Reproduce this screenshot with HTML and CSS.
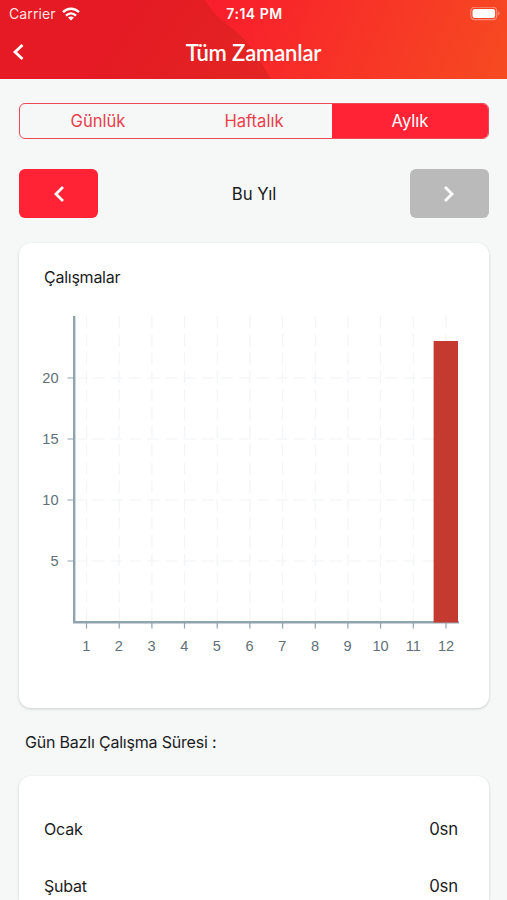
FILE: index.html
```
<!DOCTYPE html>
<html lang="tr">
<head>
  <meta charset="UTF-8">
  <meta name="viewport" content="width=device-width, initial-scale=1.0">
  <title>Tüm Zamanlar</title>
  <link rel="stylesheet" href="styles.css">
</head>
<body>
  <header class="header">
    <svg class="header-bg" viewBox="0 0 507 79" preserveAspectRatio="none">
      <defs>
        <linearGradient id="dark" gradientUnits="userSpaceOnUse" x1="120" y1="20" x2="260" y2="110">
          <stop offset="0" stop-color="#e51a24"/>
          <stop offset="1" stop-color="#e22623"/>
        </linearGradient>
        <linearGradient id="bright" gradientUnits="userSpaceOnUse" x1="225" y1="0" x2="490" y2="110">
          <stop offset="0" stop-color="#f91f2c"/>
          <stop offset="1" stop-color="#f64a21"/>
        </linearGradient>
      </defs>
      <rect width="507" height="79" fill="url(#dark)"/>
      <path fill="url(#bright)" d="M205 0C214 16 226 23 238 33C252 46 261 62 271 79H507V0Z"/>
    </svg>
    <div class="status-bar">
      <div class="carrier">
        <span>Carrier</span>
        <svg width="18" height="14" viewBox="0 0 18 14" fill="none" stroke="#fff" stroke-width="2.4">
          <path d="M1 5.2C5.5 0.6 12.5 0.6 17 5.2"/>
          <path d="M4 8.6C7 5.7 11 5.7 14 8.6"/>
          <path fill="#fff" stroke="none" d="M9 13.6L6 10.6Q9 8.3 12 10.6Z"/>
        </svg>
      </div>
      <span class="time">7:14 PM</span>
      <svg class="battery" width="30" height="14" viewBox="0 0 30 14">
        <rect x="0.8" y="0.2" width="26" height="12.4" rx="3.8" fill="none" stroke="#fff" stroke-opacity="0.4" stroke-width="1.2"/>
        <rect x="2.5" y="1.9" width="22.6" height="9" rx="2.2" fill="#fff"/>
        <path d="M28.2 4.3Q29.6 5 29.6 6.4Q29.6 7.8 28.2 8.5Z" fill="#fff" fill-opacity="0.4"/>
      </svg>
    </div>
    <div class="nav-bar">
      <svg class="back" width="12" height="18" viewBox="0 0 12 18"><path d="M10.5 2L3 9L10.5 16"/></svg>
      <h1>Tüm Zamanlar</h1>
    </div>
  </header>

  <main class="content">
    <div class="tabs">
      <div class="tab">Günlük</div>
      <div class="tab">Haftalık</div>
      <div class="tab active">Aylık</div>
    </div>

    <div class="period">
      <div class="period-btn">
        <svg width="12" height="18" viewBox="0 0 12 18"><path d="M10 2L3 9L10 16"/></svg>
      </div>
      <span class="period-name">Bu Yıl</span>
      <div class="period-btn disabled">
        <svg width="12" height="18" viewBox="0 0 12 18"><path d="M2 2L9 9L2 16"/></svg>
      </div>
    </div>

    <section class="card chart-card">
      <h2>Çalışmalar</h2>
      <svg class="chart" width="470" height="360" viewBox="19 305 470 360">
        <g class="grid">
          <path d="M86.5 316V622M119.2 316V622M151.9 316V622M184.5 316V622M217.2 316V622M249.9 316V622M282.6 316V622M315.3 316V622M347.9 316V622M380.6 316V622M413.3 316V622M446 316V622"/>
          <path d="M74 378H458M74 439H458M74 500H458M74 561H458"/>
        </g>
        <g class="ticks">
          <path d="M67.5 378H74M67.5 439H74M67.5 500H74M67.5 561H74"/>
          <path d="M86.5 622V628.5M119.2 622V628.5M151.9 622V628.5M184.5 622V628.5M217.2 622V628.5M249.9 622V628.5M282.6 622V628.5M315.3 622V628.5M347.9 622V628.5M380.6 622V628.5M413.3 622V628.5M446 622V628.5"/>
        </g>
        <path class="axis" d="M74.2 316V622.2H459"/>
        <rect class="bar" x="433.6" y="341" width="24.4" height="281.5"/>
        <g class="labels-y">
          <text x="58.5" y="383">20</text>
          <text x="58.5" y="444">15</text>
          <text x="58.5" y="505">10</text>
          <text x="58.5" y="566">5</text>
        </g>
        <g class="labels-x">
          <text x="86.2" y="651">1</text>
          <text x="118.9" y="651">2</text>
          <text x="151.6" y="651">3</text>
          <text x="184.2" y="651">4</text>
          <text x="216.9" y="651">5</text>
          <text x="249.6" y="651">6</text>
          <text x="282.3" y="651">7</text>
          <text x="315" y="651">8</text>
          <text x="347.6" y="651">9</text>
          <text x="380.6" y="651">10</text>
          <text x="413.3" y="651">11</text>
          <text x="446" y="651">12</text>
        </g>
      </svg>
    </section>

    <h2 class="list-title">Gün Bazlı Çalışma Süresi :</h2>

    <section class="card list">
      <div class="row"><span>Ocak</span><span class="value">0sn</span></div>
      <div class="row"><span>Şubat</span><span class="value">0sn</span></div>
    </section>
  </main>
</body>
</html>
```
FILE: styles.css
```
* {
  box-sizing: border-box;
}
body {
  margin: 0;
  height: 900px;
  overflow: hidden;
  background: #f6f8f8;
  color: #1c1c1e;
  font-family: Inter, "Liberation Sans", sans-serif;
  font-size: 16px;
}
h1, h2 {
  margin: 0;
  font-weight: 400;
}
svg {
  display: block;
}
.header {
  position: relative;
  height: 79px;
  color: #fff;
}
.header-bg {
  position: absolute;
  top: 0;
  left: 0;
  width: 100%;
  height: 100%;
  z-index: -1;
}
.status-bar {
  display: grid;
  grid-template-columns: 1fr auto 1fr;
  align-items: center;
  height: 27px;
  padding: 0 7px 0 9px;
  font-size: 14px;
}
.carrier {
  display: flex;
  align-items: center;
  gap: 6px;
  letter-spacing: 0.1px;
  color: rgba(255, 255, 255, 0.9);
}
.time {
  font-weight: 600;
  font-size: 14px;
  letter-spacing: 0.5px;
}
.battery {
  justify-self: end;
}
.nav-bar {
  display: grid;
  grid-template-columns: 1fr auto 1fr;
  align-items: center;
  height: 50px;
  padding: 0 12px;
}
.back, .period-btn svg {
  fill: none;
  stroke: #fff;
  stroke-width: 2.8;
}
h1 {
  font-family: Lato, sans-serif;
  font-size: 22px;
  font-weight: 600;
  letter-spacing: -0.15px;
}
.content {
  padding: 24px 18px 0 19px;
}
.tabs {
  display: flex;
  height: 36px;
  border: 1.5px solid #ec4a56;
  border-radius: 6px;
  overflow: hidden;
}
.tab {
  flex: 1;
  display: flex;
  align-items: center;
  justify-content: center;
  color: #e8404d;
  font-size: 16.6px;
}
.tab.active {
  background: #ff2335;
  color: #fff;
}
.period {
  display: flex;
  align-items: center;
  justify-content: space-between;
  margin-top: 30px;
}
.period-name {
  font-size: 16.8px;
}
.period-btn {
  display: flex;
  align-items: center;
  justify-content: center;
  width: 79px;
  height: 49px;
  border-radius: 6px;
  background: #ff2335;
}
.period-btn.disabled {
  background: #bababa;
}
.card {
  background: #fff;
  border-radius: 12px;
  box-shadow: 0 1px 3px rgba(0, 0, 0, 0.18);
}
.chart-card {
  height: 465px;
  margin-top: 25px;
  padding-top: 24px;
}
.chart-card h2 {
  padding-left: 25px;
  font-size: 16px;
  line-height: 20px;
  letter-spacing: -0.25px;
}
.chart {
  margin-top: 18px;
}
.grid path {
  fill: none;
  stroke: #f2f4f5;
  stroke-width: 1.2;
  stroke-dasharray: 12.2 6.1;
}
.bar {
  fill: #c43a31;
}
.ticks path {
  stroke: #90a4ae;
  stroke-width: 1.2;
}
.axis {
  fill: none;
  stroke: #90a4ae;
  stroke-width: 2.4;
}
.labels-x text, .labels-y text {
  fill: #607078;
  font-family: "Liberation Sans", sans-serif;
  font-size: 14.6px;
}
.labels-x text {
  text-anchor: middle;
}
.labels-y text {
  text-anchor: end;
}
.list-title {
  margin: 24px 0 0 6px;
  font-size: 16px;
  line-height: 20px;
  letter-spacing: -0.2px;
}
.list {
  height: 124px;
  margin-top: 24px;
  padding: 24px 31px 0 25px;
  border-radius: 12px 12px 0 0;
}
.row {
  display: flex;
  align-items: center;
  justify-content: space-between;
  height: 57.5px;
  letter-spacing: -0.2px;
}
.value {
  font-size: 16.8px;
}
```
